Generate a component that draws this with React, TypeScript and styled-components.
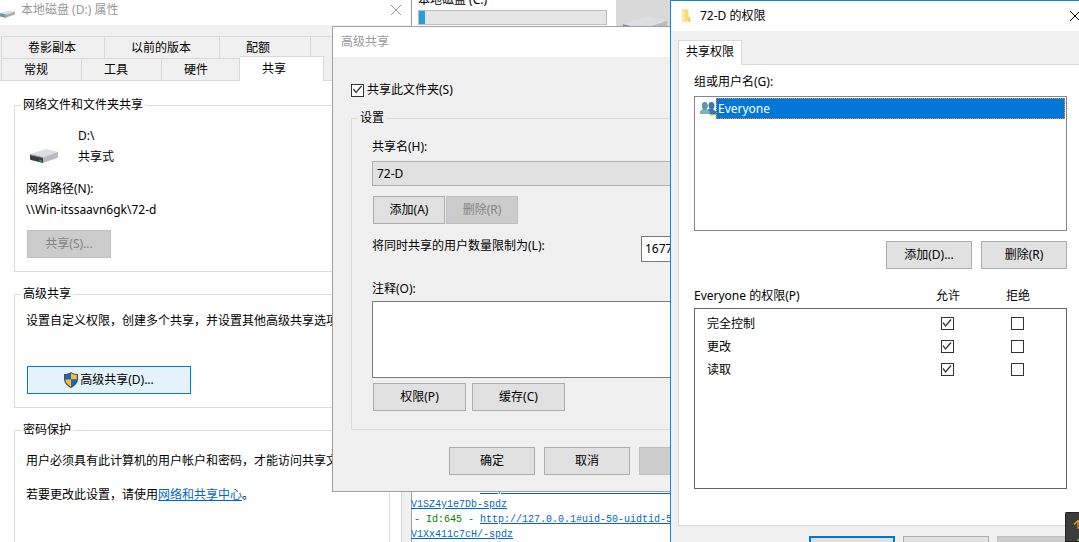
import React from "react";
import styled, { createGlobalStyle, css } from "styled-components";

const GlobalStyle = createGlobalStyle`
  *, *::before, *::after { box-sizing: border-box; }
  body {
    margin: 0;
    background: #fff;
    overflow: hidden;
  }
  body, button, input, select, textarea {
    font-family: "Noto Sans", "Noto Sans CJK SC", sans-serif;
    font-size: 12px;
    line-height: 20px;
    color: #000;
  }
`;

const Desktop = styled.main`
  position: relative;
  height: 100vh;
  overflow: hidden;
  white-space: nowrap;
`;

/* ---------- windows ---------- */

const Window = styled.section`
  position: absolute;
  display: flex;
  flex-direction: column;
  background: #f0f0f0;
  border: 1px solid #a0a0a0;
`;

const PropertiesWindow = styled(Window)`
  top: -6px;
  left: 0;
  bottom: -40px;
  width: 412px;
  border-width: 0 1px 0 0;
`;

const SharingWindow = styled(Window)`
  top: 26px;
  left: 332px;
  width: 403px;
`;

const PermissionsWindow = styled(Window)`
  top: 0;
  left: 670px;
  right: -12px;
  bottom: -34px;
  border-color: #1883d7;
`;

const TitleBar = styled.header<{ $inactive?: boolean; $tall?: boolean }>`
  display: flex;
  align-items: center;
  height: ${(p) => (p.$tall ? 31 : 30)}px;
  padding: 0 10px 0 8px;
  background: #fff;
  color: ${(p) => (p.$inactive ? "#999" : "#000")};
`;

const DriveTitle = styled(TitleBar)`
  padding-left: 0;
  gap: 5px;
`;

const Title = styled.h2`
  flex: 1;
  margin: 0;
  font-size: 12px;
  font-weight: 400;
`;

const CloseButton = styled.button`
  display: flex;
  padding: 0;
  border: 0;
  background: none;
  color: inherit;
`;

/* ---------- controls ---------- */

const Button = styled.button<{ $size?: "small" | "medium" | "wide"; $tone?: "focus" | "default" }>`
  display: flex;
  align-items: center;
  justify-content: center;
  gap: 2px;
  height: 28px;
  width: ${(p) =>
    p.$size === "small" ? 72 : p.$size === "medium" ? 93 : p.$size === "wide" ? 164 : 86}px;
  padding: 0;
  background: #e1e1e1;
  border: 1px solid #adadad;
  &:disabled {
    background: #ccc;
    border-color: #bfbfbf;
    color: #838383;
  }
  ${(p) => p.$tone === "focus" && css`
    background: #e5f1fb;
    border-color: #0078d7;
  `}
  ${(p) => p.$tone === "default" && css`
    border: 2px solid #0078d7;
  `}
`;

const ButtonRow = styled.div<{ $gap: number }>`
  display: flex;
  gap: ${(p) => p.$gap}px;
`;

const CheckBox = styled.input`
  appearance: none;
  display: block;
  width: 13px;
  height: 13px;
  margin: 0;
  background: #fff;
  border: 1px solid #333;
  &:checked::before {
    content: "";
    display: block;
    width: 11px;
    height: 11px;
    background: #333;
    clip-path: polygon(1px 5px, 2px 4px, 4px 7px, 9px 1px, 10px 2px, 4px 9px);
  }
`;

const Group = styled.fieldset<{ $grow?: boolean }>`
  flex: ${(p) => (p.$grow ? "1" : "none")};
  min-width: 0;
  margin: 0;
  padding: 0;
  border: 1px solid #dcdcdc;
`;

const Legend = styled.legend`
  margin-left: 6px;
  padding: 0 2px;
  line-height: 16px;
`;

const Text = styled.p`
  margin: 0;
  line-height: 21px;
`;

/* ---------- properties window ---------- */

const TabStrip = styled.nav`
  padding: 11px 9px 0 1px;
`;

const TabRow = styled.div`
  display: flex;
  align-items: flex-end;
  height: 22px;
  border-left: 1px solid #d9d9d9;
`;

const Tab = styled.button<{ $width: number; $indent: number; $selected?: boolean }>`
  width: ${(p) => p.$width}px;
  height: 22px;
  padding: 0 0 0 ${(p) => p.$indent}px;
  text-align: left;
  background: #f0f0f0;
  border: 1px solid #d9d9d9;
  border-width: 1px 1px 0 0;
  ${(p) => p.$selected && css`
    height: 25px;
    margin-bottom: -1px;
    background: #fff;
    z-index: 1;
  `}
`;

const PropertiesPane = styled.div`
  flex: 1;
  display: flex;
  flex-direction: column;
  gap: 14px;
  margin-right: 9px;
  padding: 16px 11px 8px 14px;
  background: #fff;
  border: 1px solid #d9d9d9;
  border-left-width: 0;
`;

const ShareBody = styled.div`
  padding: 12px 11px 13px;
`;

const DriveRow = styled.div`
  display: flex;
  align-items: flex-end;
  gap: 20px;
  margin-bottom: 11px;
  svg { margin: 0 0 4px 4px; }
`;

const ShareButton = styled(Button)`
  width: 84px;
  margin: 10px 0 0 1px;
`;

const AdvancedBody = styled.div`
  padding: 8px 11px 13px;
`;

const AdvancedButton = styled(Button)`
  margin: 35px 0 0 1px;
`;

const PasswordBody = styled.div`
  display: flex;
  flex-direction: column;
  gap: 13px;
  padding: 12px 11px;
`;

const Link = styled.a`
  color: #0066cc;
  text-decoration: underline;
`;

/* ---------- advanced sharing window ---------- */

const SharingBody = styled.div`
  display: flex;
  flex-direction: column;
  padding: 23px 9px 16px 18px;
`;

const CheckLabel = styled.label`
  display: flex;
  align-items: center;
  gap: 3px;
  margin-bottom: 10px;
`;

const SettingsBody = styled.div`
  display: flex;
  flex-direction: column;
  padding: 11px 10px 18px 20px;
`;

const ShareName = styled.select`
  appearance: none;
  height: 25px;
  margin: 4px 0 10px;
  padding: 0 4px;
  background: #e1e1e1;
  border: 1px solid #adadad;
  border-radius: 0;
`;

const InsetRow = styled(ButtonRow)`
  padding-left: 1px;
`;

const LimitRow = styled.div`
  display: flex;
  justify-content: space-between;
  align-items: flex-start;
  margin: 12px 0 17px;
`;

const LimitInput = styled.input`
  width: 73px;
  height: 26px;
  padding: 0 3px 2px;
  background: #fff;
  border: 1px solid #7a7a7a;
`;

const Comment = styled.textarea`
  height: 77px;
  margin: 2px 0 5px;
  resize: none;
  background: #fff;
  border: 1px solid #7a7a7a;
`;

const SharingFooter = styled(ButtonRow)`
  justify-content: flex-end;
  margin-top: 17px;
`;

/* ---------- permissions window ---------- */

const PermissionsBody = styled.div`
  flex: 1;
  display: flex;
  flex-direction: column;
  padding: 9px 7px 11px;
`;

const PermissionTab = styled.button`
  align-self: flex-start;
  height: 25px;
  width: 64px;
  margin-bottom: -1px;
  padding: 0 0 2px;
  background: #fff;
  border: 1px solid #d9d9d9;
  border-bottom: 0;
  z-index: 1;
`;

const PermissionPane = styled.div`
  display: flex;
  flex-direction: column;
  padding: 7px 15px 36px;
  background: #fff;
  border: 1px solid #d9d9d9;
`;

const UserList = styled.ul`
  height: 135px;
  margin: 4px 0 10px;
  padding: 1px 1px 1px 5px;
  list-style: none;
  border: 1px solid #828790;
`;

const User = styled.li`
  display: flex;
  align-items: center;
  height: 21px;
`;

const UserName = styled.span`
  flex: 1;
  height: 21px;
  line-height: 19px;
  padding-left: 1px;
  background: #0078d7;
  border: 1px dotted #ff8728;
  color: #fff;
`;

const ListActions = styled(ButtonRow)`
  justify-content: flex-end;
  margin-bottom: 17px;
`;

const PermissionTable = styled.table`
  display: flex;
  flex-direction: column;
  thead, tbody { display: block; }
  tbody {
    height: 181px;
    margin-top: 2px;
    padding: 3px 0 0 12px;
    border: 1px solid #646464;
  }
`;

const PermissionRow = styled.tr`
  display: grid;
  grid-template-columns: 1fr 70px 70px;
  align-items: center;
  padding-right: 14px;
  th, td { padding: 0; font-weight: 400; text-align: center; }
  th:first-child { text-align: left; }
  tbody & { height: 23px; }
  td { display: flex; justify-content: center; }
`;

const PermissionFooter = styled(ButtonRow)`
  justify-content: flex-end;
  margin-top: 10px;
`;

/* ---------- background windows ---------- */

const DriveTile = styled.article`
  position: absolute;
  top: -10px;
  left: 418px;
  display: flex;
  gap: 9px;
`;

const DriveInfo = styled.div`
  width: 189px;
`;

const Usage = styled.div`
  height: 15px;
  background: #e6e6e6;
  border: 1px solid #bcbcbc;
`;

const UsageFill = styled.div`
  width: 3%;
  height: 13px;
  background: #26a0da;
`;

const SelectedTile = styled.div`
  width: 64px;
  height: 60px;
  padding: 26px 7px 0;
  background: #d9d9d9;
`;

const Log = styled.div`
  position: absolute;
  top: 482px;
  left: 411px;
  right: 0;
  font-family: "Liberation Mono", monospace;
  font-size: 10px;
  line-height: 15px;
  color: #008000;
`;

const LogLine = styled.div<{ $entry?: boolean }>`
  padding-left: ${(p) => (p.$entry ? 3 : 0)}px;
`;

const Meter = styled.aside`
  position: absolute;
  top: 512px;
  right: 0;
  bottom: 0;
  width: 14px;
  padding: 6px 0 0 7px;
  overflow: hidden;
  background: #3c3c3c;
  border: 1px solid #222;
  border-right: 0;
  border-radius: 2px 0 0 0;
`;

/* ---------- drawings ---------- */

const Drive = ({ width }: { width: number }) => (
  <svg width={width} height={width / 2} viewBox="0 0 28 14" aria-hidden="true">
    <path d="M0 5.500Q0 5 1 4.700L15 .2Q16 0 17 .2L27 2.500Q28 2.800 27.500 3.500L13 8.700z" fill="#dddee1" />
    <path d="M13 8.500 28 3V8.200Q28 8.700 27 9L13 14z" fill="#b9bbbf" />
    <path d="M0 5.500 13 8.500V14L1 11Q0 10.700 0 10z" fill="#3b3d3f" />
    <path d="M0 5.300 13 8.300V9.200L0 6.200z" fill="#8b8d90" />
    <path d="M9.200 10.600 11.600 11.200V12.800L9.200 12.200z" fill="#21b63c" />
  </svg>
);

const SystemDrive = () => (
  <svg width="16" height="16" viewBox="0 0 16 16" aria-hidden="true">
    <path d="M0 11 9 8.500 15 9.700 6 12.500z" fill="#dddee1" />
    <path d="M6 12.500 15 9.700V12.500L6 15.500z" fill="#a9abaf" />
    <path d="M0 11 6 12.500V16L0 14.500z" fill="#8c9197" />
    <path d="M1 12h2v2H1z" fill="#2a9be0" />
    <path d="M4 13h1v2H4z" fill="#3fb6b0" />
  </svg>
);

const Cross = () => (
  <svg width="10" height="10" viewBox="0 0 10 10" fill="none" stroke="currentColor" aria-hidden="true">
    <path d="M0 0 10 10M10 0 0 10" />
  </svg>
);

const Shield = () => (
  <svg width="14" height="16" viewBox="0 0 14 16" aria-hidden="true">
    <path d="M7 0C5 1.600 3 2 0 2v5c0 4 3 7 7 9 4-2 7-5 7-9V2C11 2 9 1.600 7 0z" fill="#4b4f55" />
    <path d="M7 1.300C5.200 2.600 3.500 3 1.200 3v4.500H7z" fill="#1469c7" />
    <path d="M7 1.300C8.800 2.600 10.500 3 12.800 3v4.500H7z" fill="#fdbf2d" />
    <path d="M1.200 7.500C1.500 10.500 3.700 13 7 14.700V7.500z" fill="#fdbf2d" />
    <path d="M12.800 7.500C12.500 10.500 10.300 13 7 14.700V7.500z" fill="#1469c7" />
  </svg>
);

const Folder = () => (
  <svg width="21" height="16" viewBox="0 0 21 16" aria-hidden="true">
    <path d="M3 1.500h6.500V11l2 .5v2H5z" fill="#f9d878" />
    <path d="M9.500 9h1.700v4.500H9.500z" fill="#f2c75c" />
    <path d="M3 1.500 6 3.500V15L3 13.500z" fill="#ffe8a6" />
  </svg>
);

const Users = () => (
  <svg width="16" height="16" viewBox="0 0 16 16" aria-hidden="true">
    <path d="M9 12.500 16 11v3l-5 .8z" fill="#9ccb3f" />
    <path d="M8.500 4.500C8.500 2 9.700 1 11.500 1s3 1.200 3 3.500c0 1.800-.6 3-1.400 3.700l2.900 2.300V13H8V8.500l1.700-.8C9 7 8.500 6 8.500 4.500z" fill="#3a78ad" />
    <path d="M1.800 4.500C1.800 2 3 1 4.800 1s3 1.200 3 3.500C7.800 6 7.300 7.200 6.500 8l3 2v3H0v-2.500L3 8C2.300 7.200 1.800 6 1.800 4.500z" fill="#5b93a8" />
    <path d="M0 11 3 8.500 6 8.500 9.500 10.500V13H0z" fill="#7fb2c4" />
  </svg>
);

const Arrows = () => (
  <svg width="10" height="32" viewBox="0 0 10 32" fill="none" strokeWidth="1.200" aria-hidden="true">
    <path d="M5 10V2M1 5.500 5 1.500 9 5.500" stroke="#ff9c1a" />
    <path d="M5 20V30" stroke="#7bea1b" />
  </svg>
);

/* ---------- page ---------- */

const permissions = ["完全控制", "更改", "读取"];

export default function App() {
  return (
    <>
      <GlobalStyle />
      <Desktop>
        <DriveTile>
          <DriveInfo>
            <div>本地磁盘 (C:)</div>
            <Usage>
              <UsageFill />
            </Usage>
          </DriveInfo>
          <SelectedTile>
            <Drive width={44} />
          </SelectedTile>
        </DriveTile>

        <PropertiesWindow>
          <DriveTitle $inactive $tall>
            <SystemDrive />
            <Title>本地磁盘 (D:) 属性</Title>
            <CloseButton aria-label="关闭">
              <Cross />
            </CloseButton>
          </DriveTitle>
          <TabStrip>
            <TabRow>
              <Tab $width={103} $indent={26}>卷影副本</Tab>
              <Tab $width={115} $indent={26}>以前的版本</Tab>
              <Tab $width={91} $indent={26}>配额</Tab>
              <Tab $width={91} $indent={26} aria-label="自定义" />
            </TabRow>
            <TabRow>
              <Tab $width={80} $indent={22}>常规</Tab>
              <Tab $width={80} $indent={22}>工具</Tab>
              <Tab $width={78} $indent={22}>硬件</Tab>
              <Tab $width={84} $indent={22} $selected>共享</Tab>
            </TabRow>
          </TabStrip>
          <PropertiesPane>
            <Group>
              <Legend>网络文件和文件夹共享</Legend>
              <ShareBody>
                <DriveRow>
                  <Drive width={28} />
                  <div>
                    <Text>D:\</Text>
                    <Text>共享式</Text>
                  </div>
                </DriveRow>
                <Text>网络路径(N):</Text>
                <Text>{"\\\\Win-itssaavn6gk\\72-d"}</Text>
                <ShareButton disabled>共享(S)...</ShareButton>
              </ShareBody>
            </Group>
            <Group>
              <Legend>高级共享</Legend>
              <AdvancedBody>
                <Text>设置自定义权限，创建多个共享，并设置其他高级共享选项。</Text>
                <AdvancedButton $size="wide" $tone="focus">
                  <Shield />
                  高级共享(D)...
                </AdvancedButton>
              </AdvancedBody>
            </Group>
            <Group $grow>
              <Legend>密码保护</Legend>
              <PasswordBody>
                <Text>用户必须具有此计算机的用户帐户和密码，才能访问共享文件夹。</Text>
                <Text>
                  若要更改此设置，请使用<Link href="#network">网络和共享中心</Link>。
                </Text>
              </PasswordBody>
            </Group>
          </PropertiesPane>
        </PropertiesWindow>

        <Log>
          <LogLine $entry>
            - Id:646 - <Link href="#646">http://127.0.0.1#uid-50-uidtid-5</Link>
          </LogLine>
          <LogLine>
            <Link href="#646">V1SZ4y1e7Db-spdz</Link>
          </LogLine>
          <LogLine $entry>
            - Id:645 - <Link href="#645">http://127.0.0.1#uid-50-uidtid-5</Link>
          </LogLine>
          <LogLine>
            <Link href="#645">V1Xx411c7cH/-spdz</Link>
          </LogLine>
        </Log>

        <SharingWindow>
          <TitleBar $inactive>
            <Title>高级共享</Title>
          </TitleBar>
          <SharingBody>
            <CheckLabel>
              <CheckBox type="checkbox" defaultChecked />
              共享此文件夹(S)
            </CheckLabel>
            <Group>
              <Legend>设置</Legend>
              <SettingsBody>
                <label htmlFor="share-name">共享名(H):</label>
                <ShareName id="share-name">
                  <option>72-D</option>
                </ShareName>
                <InsetRow $gap={1}>
                  <Button $size="small">添加(A)</Button>
                  <Button $size="small" disabled>删除(R)</Button>
                </InsetRow>
                <LimitRow>
                  <label htmlFor="limit">将同时共享的用户数量限制为(L):</label>
                  <LimitInput id="limit" defaultValue="16777" />
                </LimitRow>
                <label htmlFor="comment">注释(O):</label>
                <Comment id="comment" />
                <InsetRow $gap={6}>
                  <Button $size="medium">权限(P)</Button>
                  <Button $size="medium">缓存(C)</Button>
                </InsetRow>
              </SettingsBody>
            </Group>
            <SharingFooter $gap={9}>
              <Button>确定</Button>
              <Button>取消</Button>
              <Button disabled aria-label="应用" />
            </SharingFooter>
          </SharingBody>
        </SharingWindow>

        <PermissionsWindow>
          <TitleBar>
            <Folder />
            <Title>72-D 的权限</Title>
            <CloseButton aria-label="关闭">
              <Cross />
            </CloseButton>
          </TitleBar>
          <PermissionsBody>
            <PermissionTab>共享权限</PermissionTab>
            <PermissionPane>
              <div id="users-label">组或用户名(G):</div>
              <UserList role="listbox" aria-labelledby="users-label">
                <User role="option" aria-selected="true">
                  <Users />
                  <UserName>Everyone</UserName>
                </User>
              </UserList>
              <ListActions $gap={9}>
                <Button>添加(D)...</Button>
                <Button>删除(R)</Button>
              </ListActions>
              <PermissionTable>
                <thead>
                  <PermissionRow>
                    <th scope="col">Everyone 的权限(P)</th>
                    <th scope="col">允许</th>
                    <th scope="col">拒绝</th>
                  </PermissionRow>
                </thead>
                <tbody>
                  {permissions.map((name) => (
                    <PermissionRow key={name}>
                      <th scope="row">{name}</th>
                      <td>
                        <CheckBox type="checkbox" defaultChecked aria-label={`${name} 允许`} />
                      </td>
                      <td>
                        <CheckBox type="checkbox" aria-label={`${name} 拒绝`} />
                      </td>
                    </PermissionRow>
                  ))}
                </tbody>
              </PermissionTable>
            </PermissionPane>
            <PermissionFooter $gap={8}>
              <Button $tone="default" aria-label="确定" />
              <Button aria-label="取消" />
              <Button disabled aria-label="应用" />
            </PermissionFooter>
          </PermissionsBody>
        </PermissionsWindow>

        <Meter>
          <Arrows />
        </Meter>
      </Desktop>
    </>
  );
}
